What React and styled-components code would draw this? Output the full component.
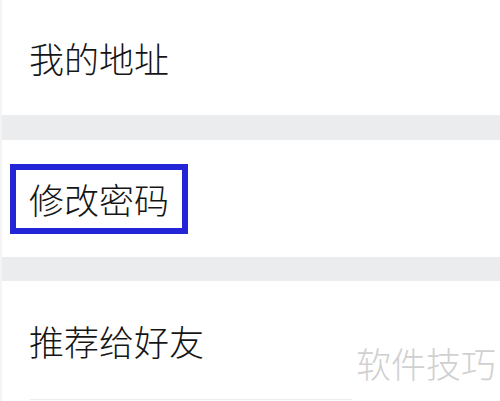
import { createGlobalStyle, styled } from 'styled-components';

const Global = createGlobalStyle`
  html, body {
    margin: 0;
    padding: 0;
    background: #ffffff;
  }
  body {
    font-family: "Noto Sans CJK SC", "Noto Sans", sans-serif;
  }
`;

const Page = styled.div`
  width: 500px;
  height: 401px;
  display: flex;
  flex-direction: column;
  overflow: hidden;
  background: #fff;
  border-left: 2px solid #f4f4f4;
  box-sizing: border-box;
`;

const Row = styled.div`
  position: relative;
  height: ${(p) => p.$h}px;
  display: flex;
  align-items: center;
  padding-left: 8px;
  background: #fff;
  flex-shrink: 0;
`;

const Band = styled.div`
  height: ${(p) => p.$h}px;
  background: #ebecee;
  flex-shrink: 0;
`;

const Label = styled.div`
  font-size: 35px;
  font-weight: 300;
  line-height: ${(p) => (p.$boxed ? '58px' : '44px')};
  color: #151515;
  padding: 0 ${(p) => (p.$boxed ? '13px' : '19px')};
  border: ${(p) => (p.$boxed ? '6px solid #2525d8' : 'none')};
  white-space: nowrap;
`;

const Divider = styled.div`
  position: absolute;
  left: 28px;
  bottom: 1px;
  width: 322px;
  height: 1px;
  background: #ededed;
`;

const Watermark = styled.div`
  position: absolute;
  right: 4px;
  top: 60px;
  font-size: 35px;
  font-weight: 300;
  line-height: 44px;
  color: #d0d0d0;
  white-space: nowrap;
`;

const App = () => {
  return (
    <Page>
      <Global />
      <Row $h={115}>
        <Label>我的地址</Label>
      </Row>
      <Band $h={25} />
      <Row $h={117}>
        <Label $boxed>修改密码</Label>
      </Row>
      <Band $h={24} />
      <Row $h={120}>
        <Label>推荐给好友</Label>
        <Divider />
        <Watermark>软件技巧</Watermark>
      </Row>
    </Page>
  );
};

export default App;
